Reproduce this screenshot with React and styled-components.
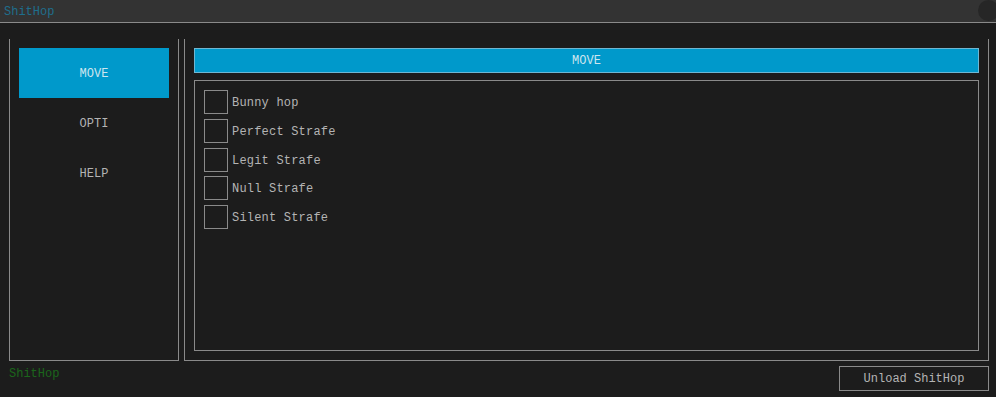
import React, { useState } from "react";
import styled, { createGlobalStyle } from "styled-components";

const GlobalStyle = createGlobalStyle`
  html, body {
    margin: 0;
    padding: 0;
    background: #1c1c1c;
    font-family: "Liberation Mono", "Courier New", monospace;
    font-size: 12px;
  }
`;

const tabs = ["MOVE", "OPTI", "HELP"];
const options = [
  "Bunny hop",
  "Perfect Strafe",
  "Legit Strafe",
  "Null Strafe",
  "Silent Strafe",
];

function App() {
  const [active, setActive] = useState("MOVE");
  const [checked, setChecked] = useState({});

  return (
    <>
      <GlobalStyle />
      <Window>
        <TitleBar>
          <Title>ShitHop</Title>
          <CloseDot />
        </TitleBar>
        <Body>
          <Sidebar>
            {tabs.map((t) => (
              <Tab key={t} active={t === active} onClick={() => setActive(t)}>
                {t}
              </Tab>
            ))}
          </Sidebar>
          <Main>
            <Header>{active}</Header>
            <OptionBox>
              {options.map((o) => (
                <Row key={o} onClick={() => setChecked({ ...checked, [o]: !checked[o] })}>
                  <Check on={checked[o]} />
                  <Label>{o}</Label>
                </Row>
              ))}
            </OptionBox>
          </Main>
        </Body>
        <Footer>
          <Brand>ShitHop</Brand>
          <UnloadButton>Unload ShitHop</UnloadButton>
        </Footer>
      </Window>
    </>
  );
}

export default App;

const Window = styled.div`
  width: 996px;
  height: 397px;
  display: flex;
  flex-direction: column;
  background: #1c1c1c;
  overflow: hidden;
`;

const TitleBar = styled.div`
  height: 22px;
  border-bottom: 1px solid #8a8a8a;
  background: #333333;
  display: flex;
  align-items: center;
  justify-content: space-between;
  padding-left: 4px;
`;

const Title = styled.span`
  color: #1f6e8c;
  font-size: 12px;
  line-height: 22px;
  padding-top: 1px;
`;

const CloseDot = styled.div`
  width: 21px;
  height: 21px;
  border-radius: 50%;
  background: #262626;
  margin-right: -3px;
  margin-top: -2px;
`;

const Body = styled.div`
  display: flex;
  gap: 5px;
  padding: 16px 7px 0 9px;
  height: 322px;
`;

const Sidebar = styled.div`
  width: 150px;
  border: 1px solid #8a8a8a;
  border-top: none;
  padding: 9px 9px 0;
  display: flex;
  flex-direction: column;
`;

const Tab = styled.div`
  height: 50px;
  box-sizing: border-box;
  padding-top: 2px;
  display: flex;
  align-items: center;
  justify-content: center;
  color: ${(p) => (p.active ? "#cde6ef" : "#b4b4b4")};
  background: ${(p) => (p.active ? "#0099cb" : "transparent")};
  cursor: pointer;
`;

const Main = styled.div`
  flex: 1;
  border: 1px solid #8a8a8a;
  border-top: none;
  padding: 9px 9px 9px;
  display: flex;
  flex-direction: column;
  gap: 7px;
`;

const Header = styled.div`
  height: 23px;
  background: #0099cb;
  border: 1px solid #6fb7d3;
  color: #cde6ef;
  display: flex;
  align-items: center;
  justify-content: center;
`;

const OptionBox = styled.div`
  flex: 1;
  border: 1px solid #8a8a8a;
  padding: 9px 9px;
  display: flex;
  flex-direction: column;
  gap: 4.75px;
`;

const Row = styled.div`
  display: flex;
  align-items: center;
  gap: 4px;
  height: 24px;
  cursor: pointer;
`;

const Check = styled.div`
  width: 22px;
  height: 22px;
  border: 1px solid #8a8a8a;
  background: ${(p) => (p.on ? "#0099cb" : "transparent")};
`;

const Label = styled.span`
  color: #b4b4b4;
  letter-spacing: 0.2px;
  padding-top: 2px;
`;

const Footer = styled.div`
  flex: 1;
  display: flex;
  align-items: flex-start;
  justify-content: space-between;
  padding: 5px 7px 0 9px;
`;

const Brand = styled.span`
  color: #1b661b;
  line-height: 14px;
  padding-top: 1px;
`;

const UnloadButton = styled.button`
  width: 150px;
  height: 25px;
  background: transparent;
  border: 1px solid #8a8a8a;
  color: #b4b4b4;
  font-family: "Liberation Mono", "Courier New", monospace;
  font-size: 12px;
  padding: 0;
`;
